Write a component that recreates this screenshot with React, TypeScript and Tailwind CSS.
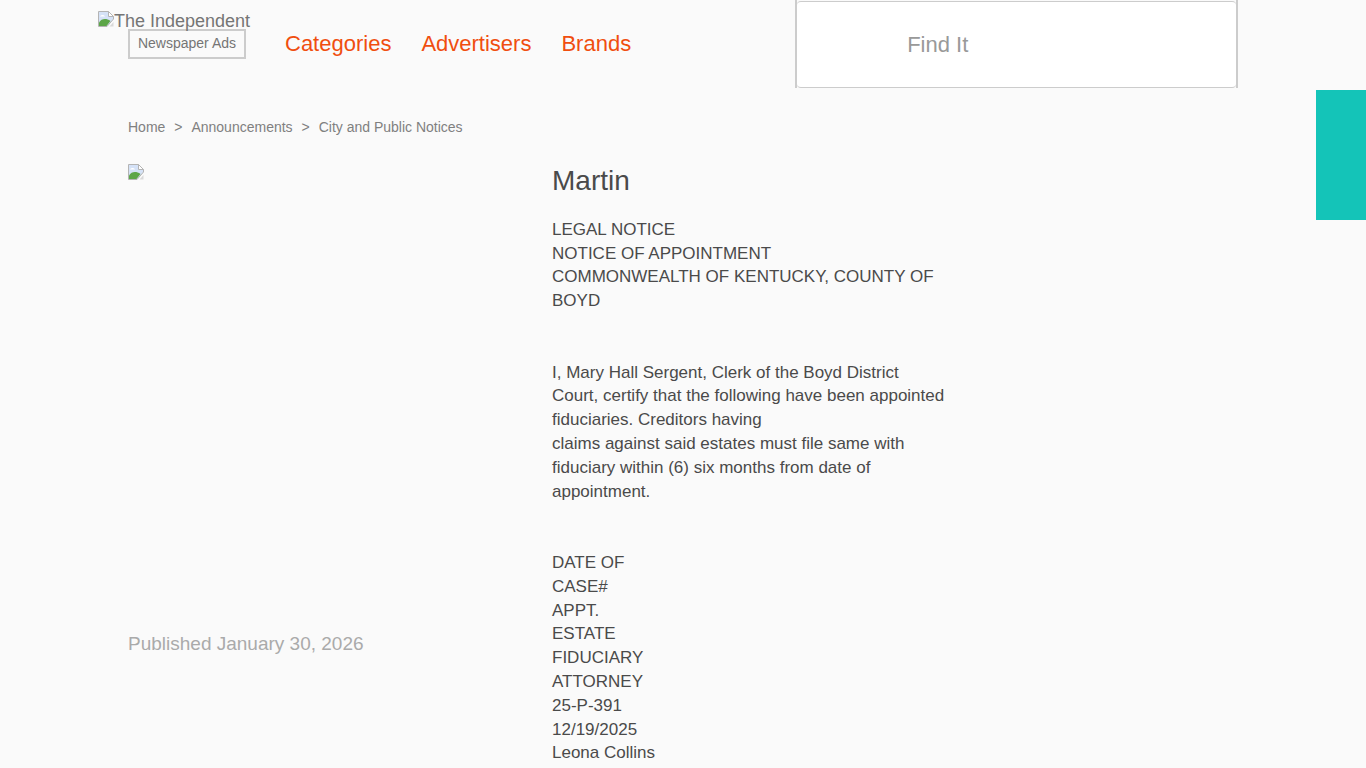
function BrokenImage() {
  return (
    <svg width="16" height="16" viewBox="0 0 16 16" className="block shrink-0">
      <path d="M0.5 0.5H10.5L15.5 5.5V8L9 15.5H0.5Z" fill="#d5e2f7" stroke="#b4b4b4" />
      <path d="M10.5 0.5V5.5H15.5Z" fill="#ffffff" stroke="#b4b4b4" />
      <path d="M2 5.5C3 3.5 6 3.5 7 5.5Z" fill="#ffffff" />
      <path d="M1 15V11.5C3.5 7.5 8 7 12.5 10L8.5 15Z" fill="#5da648" />
      <path d="M11.5 15.5L15.5 11V15.5Z" fill="#d9d9d9" />
    </svg>
  )
}

const crumbs = ["Home", "Announcements", "City and Public Notices"]

const firstBlock = [
  "LEGAL NOTICE",
  "NOTICE OF APPOINTMENT",
  "COMMONWEALTH OF KENTUCKY, COUNTY OF BOYD",
]

const secondBlock = [
  "I, Mary Hall Sergent, Clerk of the Boyd District Court, certify that the following have been appointed fiduciaries. Creditors having",
  "claims against said estates must file same with fiduciary within (6) six months from date of appointment.",
]

const thirdBlock = [
  "DATE OF",
  "CASE#",
  "APPT.",
  "ESTATE",
  "FIDUCIARY",
  "ATTORNEY",
  "25-P-391",
  "12/19/2025",
  "Leona Collins",
]

export default function App() {
  return (
    <div className="relative h-[768px] overflow-hidden bg-[#fafafa] font-['Liberation_Sans',Arial,sans-serif] text-[#4a4a4a]">
      {/* Header */}
      <header className="relative flex h-[90px] pl-[128px]">
        <div className="absolute left-[98px] top-[11px] flex items-start text-lg leading-[20px] text-[#757575]">
          <BrokenImage />
          <span>The Independent</span>
        </div>

        <div className="mt-[29px] flex h-[30px] w-[118px] items-center justify-center border-2 border-[#cccccc] pb-[2px] text-sm text-[#757575]">
          Newspaper Ads
        </div>

        <nav className="ml-[39px] mt-[29px] flex gap-[30px] text-[22px] leading-[29px] text-[#f04e0f]">
          <a>Categories</a>
          <a>Advertisers</a>
          <a>Brands</a>
        </nav>

        <div className="ml-[164px] h-[88px] w-[443px] border-x-2 border-[#cccccc]">
          <div className="mt-[1px] flex h-[87px] items-center rounded-[4px] border-y border-[#cccccc] bg-white pl-[110px] text-[22px] text-[#999999]">
            Find It
          </div>
        </div>
      </header>

      {/* Teal side tab */}
      <div className="absolute right-0 top-[90px] h-[130px] w-[50px] bg-[#14c4b8]" />

      {/* Breadcrumb */}
      <div className="ml-[128px] mt-[28px] flex h-[18px] items-center text-sm text-[#808080]">
        {crumbs.map((c, i) => (
          <span key={c} className="flex items-center">
            {i > 0 && <span className="mx-[8.95px]">&gt;</span>}
            {c}
          </span>
        ))}
      </div>

      {/* Main */}
      <main className="ml-[128px] mt-[28px] flex">
        <div className="w-[424px] shrink-0">
          <BrokenImage />
          <p className="mt-[450px] text-[19px] leading-[28px] text-[#aaaaaa]">Published January 30, 2026</p>
        </div>

        <div className="w-[396px] text-[17px] leading-[23.8px]">
          <h1 className="mt-[1px] text-[28px] leading-[32px]">Martin</h1>

          <div className="mt-[20.8px]">
            {firstBlock.map((l) => (
              <div key={l}>{l}</div>
            ))}
          </div>

          <div className="mt-[47.6px]">
            {secondBlock.map((l) => (
              <div key={l}>{l}</div>
            ))}
          </div>

          <div className="mt-[47.6px]">
            {thirdBlock.map((l) => (
              <div key={l}>{l}</div>
            ))}
          </div>
        </div>
      </main>
    </div>
  )
}
